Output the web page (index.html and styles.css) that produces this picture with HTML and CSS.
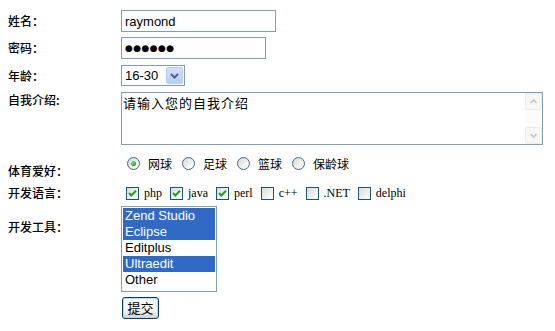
FILE: index.html
```html
<!DOCTYPE html>
<html lang="zh-CN">
<head>
<meta charset="utf-8">
<title>注册表单</title>
<link rel="stylesheet" href="styles.css">
</head>
<body>
<form class="form">
  <div class="row r-name">
    <label class="lbl">姓名：</label>
    <input class="txt name" type="text" value="raymond">
  </div>
  <div class="row r-pwd">
    <label class="lbl">密码：</label>
    <input class="txt pwd" type="text" value="●●●●●●">
  </div>
  <div class="row r-age">
    <label class="lbl">年龄：</label>
    <div class="selectbox">
      <span class="sel-val">16-30</span>
      <span class="sel-btn"><svg width="15" height="17" viewBox="0 0 15 17"><path d="M4 7 L7.5 10.5 L11 7" fill="none" stroke="#4D6185" stroke-width="2"/></svg></span>
    </div>
  </div>
  <div class="row r-intro">
    <label class="lbl lbl-top">自我介绍:</label>
    <div class="ta-wrap">
      <div class="ta-text">请输入您的自我介绍</div>
      <div class="sb">
        <span class="sb-btn"><svg width="15" height="15" viewBox="0 0 15 15"><path d="M4.5 9 L7.5 6 L10.5 9" fill="none" stroke="#C9C7BA" stroke-width="1.6"/></svg></span>
        <span class="sb-track"></span>
        <span class="sb-btn"><svg width="15" height="15" viewBox="0 0 15 15"><path d="M4.5 6 L7.5 9 L10.5 6" fill="none" stroke="#C9C7BA" stroke-width="1.6"/></svg></span>
      </div>
    </div>
  </div>
  <div class="row r-sport">
    <label class="lbl lbl-sport">体育爱好：</label>
    <div class="choices radios">
      <span class="opt"><span class="radio on"></span>网球</span>
      <span class="opt"><span class="radio"></span>足球</span>
      <span class="opt"><span class="radio"></span>篮球</span>
      <span class="opt"><span class="radio"></span>保龄球</span>
    </div>
  </div>
  <div class="row r-lang">
    <label class="lbl">开发语言：</label>
    <div class="choices checks">
      <span class="opt"><span class="cb"><svg width="11" height="11" viewBox="0 0 11 11"><path d="M2 5 L4.3 7.5 L9 2.8" fill="none" stroke="#21A121" stroke-width="2"/></svg></span>php</span>
      <span class="opt"><span class="cb"><svg width="11" height="11" viewBox="0 0 11 11"><path d="M2 5 L4.3 7.5 L9 2.8" fill="none" stroke="#21A121" stroke-width="2"/></svg></span>java</span>
      <span class="opt"><span class="cb"><svg width="11" height="11" viewBox="0 0 11 11"><path d="M2 5 L4.3 7.5 L9 2.8" fill="none" stroke="#21A121" stroke-width="2"/></svg></span>perl</span>
      <span class="opt"><span class="cb"></span>c++</span>
      <span class="opt"><span class="cb"></span>.NET</span>
      <span class="opt"><span class="cb"></span>delphi</span>
    </div>
  </div>
  <div class="row r-tools">
    <label class="lbl lbl-tools">开发工具：</label>
    <div class="listbox">
      <div class="item sel">Zend Studio</div>
      <div class="item sel">Eclipse</div>
      <div class="item">Editplus</div>
      <div class="item sel">Ultraedit</div>
      <div class="item">Other</div>
    </div>
  </div>
  <div class="row r-submit">
    <span class="lbl"></span>
    <button class="btn" type="button">提交</button>
  </div>
</form>
</body>
</html>
```
FILE: styles.css
```css
html, body {
  background: #ffffff;
}
body {
  margin: 8px;
  font-family: "Noto Sans CJK SC", "Liberation Sans", sans-serif;
  font-size: 12px;
  color: #000000;
}
.form {
  display: flex;
  flex-direction: column;
}
.row {
  display: flex;
  align-items: center;
}
.lbl {
  width: 113px;
  flex: none;
  line-height: 14px;
  font-size: 12px;
  font-weight: 500;
}
.lbl-top {
  align-self: flex-start;
  padding-top: 1px;
}
.r-name { margin-top: 2px; }
.r-pwd { margin-top: 5px; }
.r-age { margin-top: 6px; }
.r-intro { margin-top: 6px; }
.r-sport { margin-top: 10px; align-items: flex-start; }
.r-lang { margin-top: 7px; }
.r-tools { margin-top: 5px; align-items: flex-start; }
.r-submit { margin-top: 5px; }

.txt {
  box-sizing: border-box;
  height: 22px;
  border: 1px solid #7F9DB9;
  padding: 0 3px;
  margin: 0;
  font-family: "Liberation Sans", Arial, sans-serif;
  font-size: 13px;
  color: #000;
  background: #fff;
  outline: none;
}
.name { width: 155px; }
.pwd {
  width: 145px;
  font-family: "DejaVu Sans", sans-serif;
  font-size: 9px;
  letter-spacing: 0.4px;
}

.selectbox {
  box-sizing: border-box;
  width: 64px;
  height: 21px;
  border: 1px solid #7F9DB9;
  display: flex;
  align-items: center;
  justify-content: space-between;
  padding: 1px;
  background: #fff;
}
.sel-val {
  font-family: "Liberation Sans", Arial, sans-serif;
  font-size: 13px;
  padding-left: 2px;
}
.sel-btn {
  box-sizing: border-box;
  width: 17px;
  height: 17px;
  border: 1px solid #B9CCF5;
  border-radius: 2px;
  background: linear-gradient(#D4E0FC, #B7CDF8);
  display: flex;
  align-items: center;
  justify-content: center;
}
.sel-btn svg { display: block; }

.ta-wrap {
  box-sizing: border-box;
  width: 422px;
  height: 53px;
  border: 1px solid #7F9DB9;
  display: flex;
  background: #fff;
}
.ta-text {
  flex: 1;
  padding: 2px 1px;
  font-size: 13px;
  line-height: 16px;
  letter-spacing: 1px;
}
.sb {
  width: 17px;
  display: flex;
  flex-direction: column;
  background: #FBFBF8;
}
.sb-btn {
  box-sizing: border-box;
  width: 17px;
  height: 17px;
  border: 1px solid #EEEDE5;
  border-radius: 2px;
  background: #F7F7F3;
  display: flex;
  align-items: center;
  justify-content: center;
}
.sb-btn svg { display: block; }
.sb-track { flex: 1; }

.choices {
  display: flex;
  align-items: center;
}
.opt {
  display: flex;
  align-items: center;
}
.radios { padding-left: 6px; height: 16px; }
.radios .opt { margin-right: 10px; }
.radios .opt .radio { margin-right: 8px; }
.lbl-sport { padding-top: 9px; }
.radio {
  box-sizing: border-box;
  width: 13px;
  height: 13px;
  border-radius: 50%;
  border: 1px solid #3E6894;
  background: linear-gradient(135deg, #D8D8D1, #F6F6F3 70%, #FFFFFF);
  display: flex;
  align-items: center;
  justify-content: center;
}
.radio.on::after {
  content: "";
  width: 5px;
  height: 5px;
  border-radius: 50%;
  background: radial-gradient(circle at 35% 35%, #8CE08C, #21A121 70%);
}

.checks {
  padding-left: 5px;
  font-family: "Liberation Serif", "Times New Roman", serif;
  font-size: 12px;
  height: 16px;
}
.checks .opt { margin-right: 8px; }
.cb {
  box-sizing: border-box;
  width: 13px;
  height: 13px;
  border: 1px solid #1C5180;
  background: linear-gradient(135deg, #DCDCD7, #F4F4F1 70%, #FFFFFF);
  margin-right: 5px;
  display: flex;
  align-items: center;
  justify-content: center;
}
.cb svg { display: block; }

.lbl-tools { padding-top: 14px; }
.listbox {
  box-sizing: border-box;
  width: 96px;
  height: 86px;
  border: 1px solid #7F9DB9;
  padding: 1px 1px 3px 1px;
  font-family: "Liberation Sans", Arial, sans-serif;
  font-size: 13px;
  background: #fff;
}
.item {
  height: 16px;
  line-height: 16px;
  padding-left: 2px;
}
.item.sel {
  background: #316AC5;
  color: #ffffff;
}

.btn {
  box-sizing: border-box;
  margin: 0 0 0 1px;
  width: 37px;
  height: 22px;
  padding: 0;
  border: 1px solid #003C74;
  border-radius: 3px;
  background: linear-gradient(#FFFFFF, #F4F4F0 60%, #E3E1D8 85%, #D2CCBF);
  box-shadow: inset 0 0 0 1px #C4D6F6;
  font-family: "Noto Sans CJK SC", sans-serif;
  font-size: 13px;
  color: #000;
  line-height: 18px;
}
```
